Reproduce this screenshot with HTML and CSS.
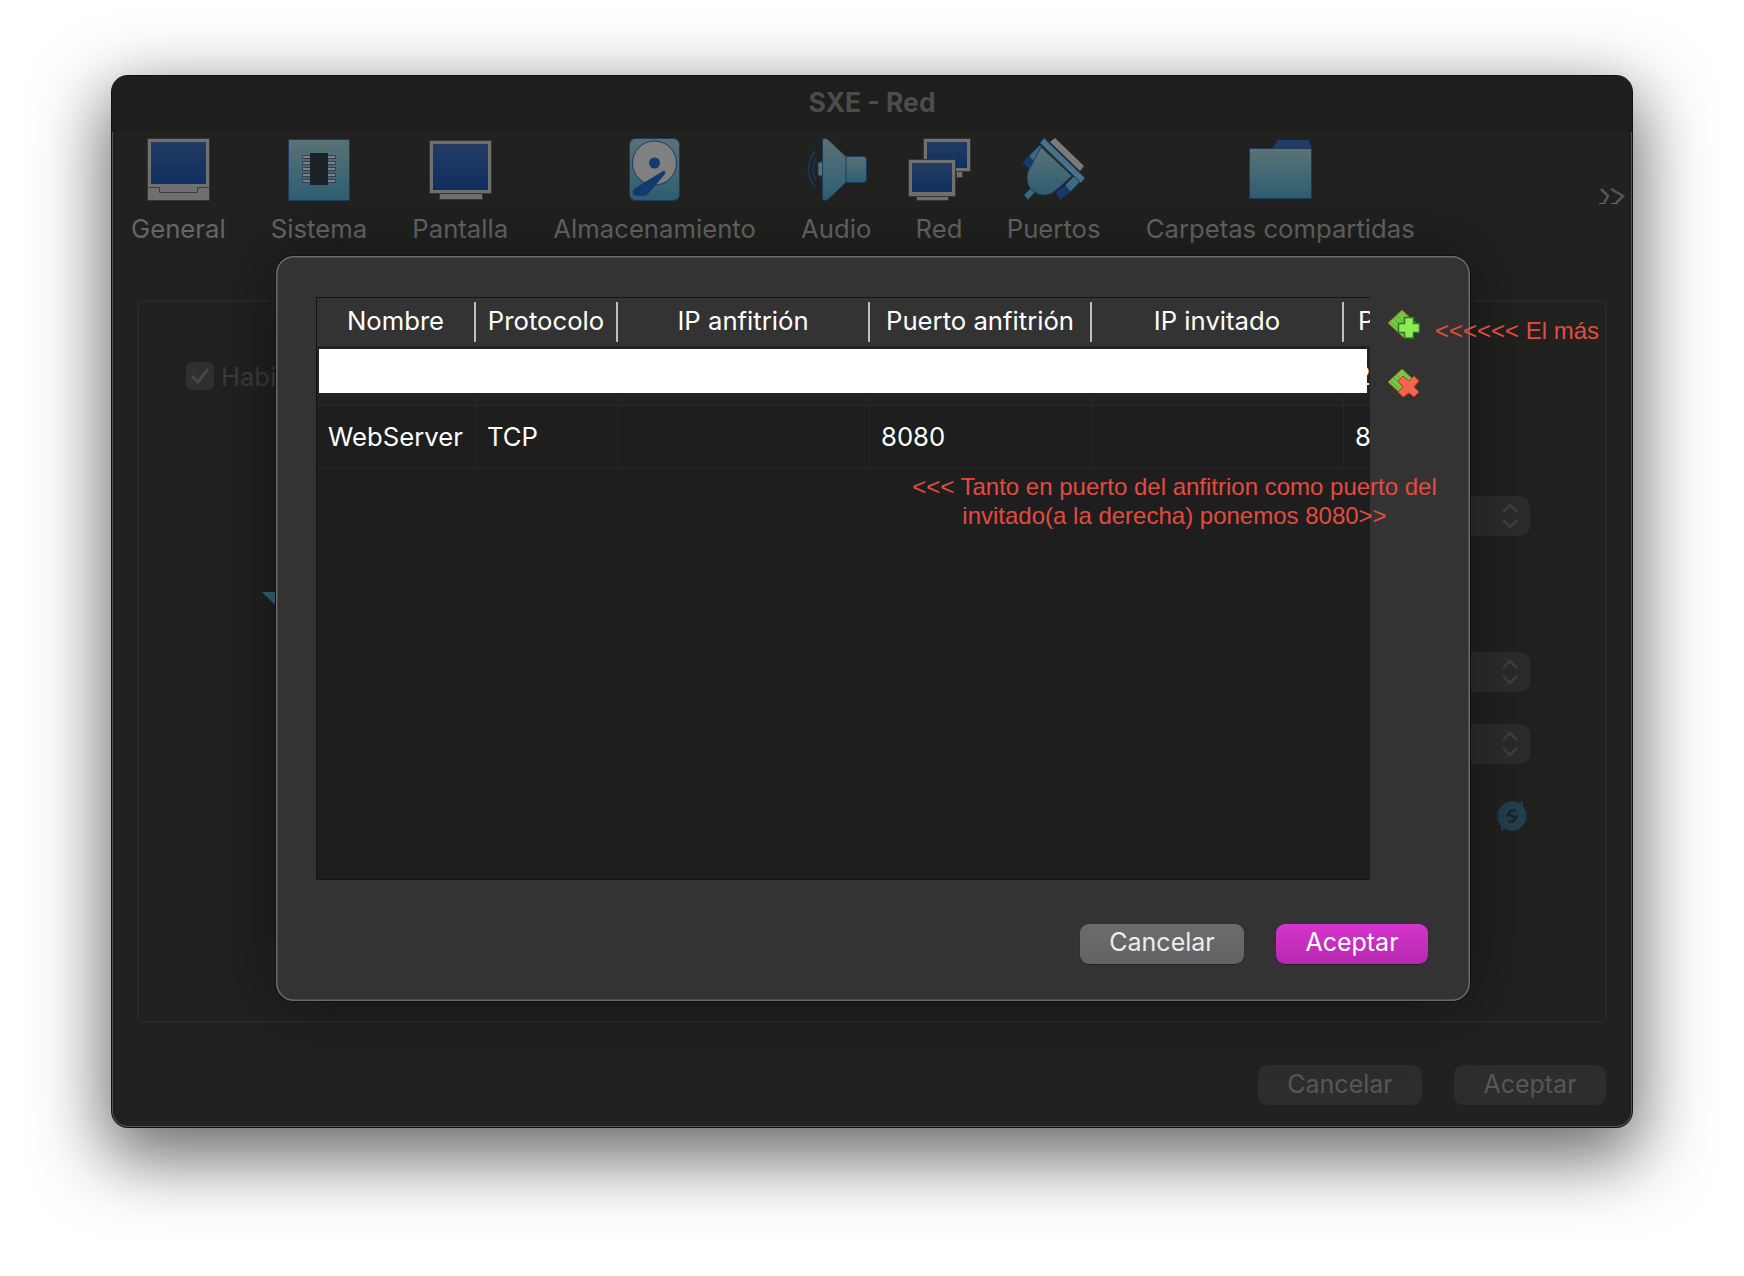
FILE: index.html
```html
<!DOCTYPE html>
<html lang="es">
<head>
    <meta charset="UTF-8">
    <meta name="viewport" content="width=device-width, initial-scale=1.0">
    <title>SXE - Red</title>
    <link rel="stylesheet" href="styles.css">
</head>
<body>
    <div class="page">
    <div class="window">
        <div class="titlebar">SXE - Red</div>

        <div class="toolbar">
            <div class="tool">
                <svg class="tool-icon" width="63" height="63" viewBox="0 0 63 63">
                    <defs>
                        <linearGradient id="teal" x1="0" y1="0" x2="0" y2="1">
                            <stop offset="0" stop-color="#5a7276"/>
                            <stop offset="1" stop-color="#2e5f72"/>
                        </linearGradient>
                        <linearGradient id="screen" x1="0" y1="0" x2="0" y2="1">
                            <stop offset="0" stop-color="#233b62"/>
                            <stop offset="1" stop-color="#0f3060"/>
                        </linearGradient>
                    </defs>
                    <rect x="0.5" y="0.5" width="62" height="62" fill="#707070" stroke="#363636"/>
                    <rect x="4" y="4" width="55" height="42" fill="url(#screen)"/>
                    <path d="M0 49.5H12.5V54.5H50.5V49.5H63" fill="none" stroke="#3c3c3c"/>
                </svg>
                <span>General</span>
            </div>
            <div class="tool">
                <svg class="tool-icon" width="62" height="63" viewBox="0 0 62 63">
                    <rect x="0.5" y="1.5" width="61" height="61" fill="url(#teal)" stroke="#1c3a60"/>
                    <g fill="#808080" stroke="#34405a">
                        <rect x="14.5" y="17.5" width="8" height="3"/>
                        <rect x="14.5" y="23.5" width="8" height="3"/>
                        <rect x="14.5" y="29.5" width="8" height="3"/>
                        <rect x="14.5" y="35.5" width="8" height="3"/>
                        <rect x="14.5" y="41.5" width="8" height="3"/>
                        <rect x="39.5" y="17.5" width="8" height="3"/>
                        <rect x="39.5" y="23.5" width="8" height="3"/>
                        <rect x="39.5" y="29.5" width="8" height="3"/>
                        <rect x="39.5" y="35.5" width="8" height="3"/>
                        <rect x="39.5" y="41.5" width="8" height="3"/>
                    </g>
                    <rect x="22" y="15" width="18" height="32" fill="#1c2227"/>
                </svg>
                <span>Sistema</span>
            </div>
            <div class="tool">
                <svg class="tool-icon" width="63" height="63" viewBox="0 0 63 63">
                    <rect x="10.5" y="50.5" width="43" height="11" fill="#707070" stroke="#363636"/>
                    <rect x="0.5" y="2.5" width="62" height="53" fill="#707070" stroke="#363636"/>
                    <rect x="4" y="6" width="55" height="46" fill="url(#screen)"/>
                </svg>
                <span>Pantalla</span>
            </div>
            <div class="tool">
                <svg class="tool-icon" width="51" height="63" viewBox="0 0 51 63">
                    <rect x="0.5" y="0.5" width="50" height="62" rx="6" fill="url(#teal)" stroke="#1c3a60"/>
                    <circle cx="25.5" cy="25" r="22" fill="#808080" stroke="#1c3a60"/>
                    <circle cx="25.5" cy="25" r="5.5" fill="#143a70"/>
                    <path d="M34 33Q37 32 36 36L19 56Q17 58 13 58H8Q3 57 4 53Q5 50 8 49Z" fill="#143a70"/>
                </svg>
                <span>Almacenamiento</span>
            </div>
            <div class="tool">
                <svg class="tool-icon" width="62" height="63" viewBox="0 0 62 63">
                    <path d="M11 20Q5 31 11 42M10 13Q-3 31 10 49" fill="none" stroke="#143a66" stroke-width="1.5"/>
                    <rect x="13" y="24" width="6" height="14" rx="2" fill="#5a7276" stroke="#1c3a60"/>
                    <rect x="38.5" y="18.5" width="23" height="26" rx="3" fill="url(#teal)" stroke="#1c3a60"/>
                    <path d="M17.5 2Q17.5 .5 19.5 .5Q22 .5 24 2.500L41 18.500V44.500L24 60.500Q22 62.500 19.500 62.500Q17.500 62.500 17.500 60Z" fill="url(#teal)" stroke="#1c3a60"/>
                </svg>
                <span>Audio</span>
            </div>
            <div class="tool tool-tight">
                <svg class="tool-icon" width="63" height="63" viewBox="0 0 63 63">
                    <rect x="48.500" y="30.500" width="6" height="9" fill="#707070" stroke="#363636"/>
                    <rect x="15.500" y="0.500" width="47" height="33" fill="#707070" stroke="#363636"/>
                    <rect x="19" y="4" width="40" height="26" fill="url(#screen)"/>
                    <rect x="8.500" y="54.500" width="32" height="8" fill="#707070" stroke="#363636"/>
                    <rect x="0.500" y="21.500" width="47" height="37" fill="#707070" stroke="#363636"/>
                    <rect x="4" y="25" width="40" height="29" fill="url(#screen)"/>
                </svg>
                <span>Red</span>
            </div>
            <div class="tool">
                <svg class="tool-icon" width="63" height="63" viewBox="0 0 63 63">
                    <path d="M33 0L62 28L58 33L28 4Z" fill="#7a7a7a"/>
                    <path d="M0 25L7 18L12 24L8 31Z" fill="#143a70"/>
                    <path d="M7 18L18 7L24 13L12 24Z" fill="#3d6a82" stroke="#1c3a60"/>
                    <path d="M34 54L43 47L48 54L38 62Z" fill="#143a70"/>
                    <path d="M43 47L52 38L58 44L48 54Z" fill="#3d6a82" stroke="#1c3a60"/>
                    <path d="M2 57L9 50L13 54L6 62Z" fill="#3d6a82" stroke="#1c3a60"/>
                    <path d="M19 9L50 38L33 53Q26 59 16 56Q6 52 5 41Q5 33 9 28Z" fill="url(#teal)" stroke="#1c3a60"/>
                    <path d="M18 5L22 0L63 40L59 45Z" fill="#4a7287" stroke="#1c3a60"/>
                </svg>
                <span>Puertos</span>
            </div>
            <div class="tool">
                <svg class="tool-icon" width="63" height="63" viewBox="0 0 63 63">
                    <path d="M23 11L29 2H60L63 11Z" fill="#1f3d68"/>
                    <rect x="0.500" y="10.500" width="62" height="50" fill="url(#teal)" stroke="#1c3a60"/>
                </svg>
                <span>Carpetas compartidas</span>
            </div>
            <svg class="more" width="27" height="16" viewBox="0 0 27 16">
                <path d="M2 1L9 8L5 15M12 1L24 8L17 15" fill="none" stroke="#555" stroke-width="2.500"/>
                <path d="M0 15.500H6M12 15.500H18" stroke="#6a6a6a" stroke-width="1"/>
            </svg>
        </div>

        <div class="group">
            <div class="check-row">
                <span class="checkbox">
                    <svg width="20" height="18" viewBox="0 0 20 18">
                        <path d="M2 9L8 15L18 2" fill="none" stroke="#484848" stroke-width="3"/>
                    </svg>
                </span>
                <span>Habilitar adaptador de red</span>
            </div>
            <div class="select select-first"><svg class="updown" width="16" height="26" viewBox="0 0 16 26"><path d="M1 9L8 2L15 9M1 17L8 24L15 17" fill="none" stroke="#404040" stroke-width="2.500"/></svg></div>
            <svg class="arrow" width="14" height="14" viewBox="0 0 14 14"><path d="M0 0H14V14Z" fill="#34627a"/></svg>
            <div class="select select-second"><svg class="updown" width="16" height="26" viewBox="0 0 16 26"><path d="M1 9L8 2L15 9M1 17L8 24L15 17" fill="none" stroke="#404040" stroke-width="2.500"/></svg></div>
            <div class="select select-third"><svg class="updown" width="16" height="26" viewBox="0 0 16 26"><path d="M1 9L8 2L15 9M1 17L8 24L15 17" fill="none" stroke="#404040" stroke-width="2.500"/></svg></div>
            <svg class="refresh" width="32" height="32" viewBox="0 0 32 32">
                <circle cx="16" cy="16" r="14.500" fill="#24404e" stroke="#1c3a52"/>
                <path d="M24 2L27 1L27 9ZM8 30L5 31L5 23Z" fill="#24404e"/>
                <path d="M1 16H31" stroke="#17364a" stroke-width="1"/>
                <path d="M20 11Q15 9 13 13L12 15H17M12 21Q17 23 19 19L20 17H15" fill="none" stroke="#16262f" stroke-width="2.500"/>
            </svg>
        </div>

        <div class="actions actions-back">
            <div class="btn btn-dim">Cancelar</div>
            <div class="btn btn-dim">Aceptar</div>
        </div>

        <div class="dialog">
            <div class="dialog-body">
                <div class="rules">
                    <div class="rules-row rules-head">
                        <div class="rules-cell">Nombre</div>
                        <div class="rules-cell">Protocolo</div>
                        <div class="rules-cell">IP anfitrión</div>
                        <div class="rules-cell">Puerto anfitrión</div>
                        <div class="rules-cell">IP invitado</div>
                        <div class="rules-cell">Puerto invitado</div>
                    </div>
                    <div class="rules-row rules-editing">
                        <div class="rules-cell"></div>
                        <div class="rules-cell"></div>
                        <div class="rules-cell"></div>
                        <div class="rules-cell"></div>
                        <div class="rules-cell"></div>
                        <div class="rules-cell">22</div>
                        <div class="edit-bar"></div>
                    </div>
                    <div class="rules-row rules-data">
                        <div class="rules-cell">WebServer</div>
                        <div class="rules-cell">TCP</div>
                        <div class="rules-cell"></div>
                        <div class="rules-cell">8080</div>
                        <div class="rules-cell"></div>
                        <div class="rules-cell">8080</div>
                    </div>
                </div>
                <div class="rule-tools">
                    <svg width="32" height="32" viewBox="0 0 32 32">
                        <path d="M17 0L32 14L18 31Z" fill="none" stroke="#2c4a2c" stroke-width="0.600"/>
                        <path d="M14 3L0 16L16 31L28 16Z" fill="#74c944" stroke="#c8502a" stroke-width="0.800"/>
                        <path d="M6 12L18 24M9 9L21 21M3 15L15 27" stroke="#5aa834" stroke-width="1"/>
                        <path d="M16.500 10.500H25.500V16.500H31.500V25.500H25.500V31H16.500V25.500H10.500V16.500H16.500Z" fill="#8fea58" stroke="#2a7a1e" stroke-width="1.500"/>
                    </svg>
                    <svg width="32" height="32" viewBox="0 0 32 32">
                        <path d="M17 0L32 14L18 31Z" fill="none" stroke="#2c4a2c" stroke-width="0.600"/>
                        <path d="M14 3L0 16L16 31L28 16Z" fill="#74c944" stroke="#c8502a" stroke-width="0.800"/>
                        <path d="M6 12L18 24M9 9L21 21M3 15L15 27" stroke="#5aa834" stroke-width="1"/>
                        <path d="M15 10L21 15L26 10L31 15L26 21L31 26L26 31L21 27L15 31L10 26L15 21L10 15Z" fill="#f0664e" stroke="#c03020" stroke-width="1"/>
                    </svg>
                </div>
            </div>
            <div class="actions actions-front">
                <div class="btn btn-cancel">Cancelar</div>
                <div class="btn btn-accept">Aceptar</div>
            </div>
        </div>

        <div class="note note-plus">&lt;&lt;&lt;&lt;&lt;&lt; El más</div>
        <div class="note note-ports">&lt;&lt;&lt; Tanto en puerto del anfitrion como puerto del<br>invitado(a la derecha) ponemos 8080&gt;&gt;</div>
    </div>
    </div>
</body>
</html>
```

FILE: styles.css
```css
html {
    background: #fff;
}

body {
    margin: 0;
    font-family: Inter, "Noto Sans", sans-serif;
    font-size: 25.700px;
}

.page {
    box-sizing: border-box;
    height: 1276px;
    padding: 76px 0 0 112px;
}

.window {
    position: relative;
    box-sizing: border-box;
    width: 1520px;
    height: 1051px;
    background: #212120;
    border-radius: 16px;
    box-shadow: 0 0 0 1px #111, inset 0 0 0 1px #555, 0 24px 70px 8px rgba(0, 0, 0, 0.58);
}

.titlebar {
    height: 56px;
    line-height: 53px;
    text-align: center;
    font-size: 26.500px;
    font-weight: 700;
    color: #4c4c4c;
    background: #1e1e1d;
    border-radius: 16px 16px 0 0;
}

.toolbar {
    display: flex;
    gap: 45.200px;
    height: 168px;
    box-sizing: border-box;
    padding: 6px 0 0 19px;
}

.tool {
    display: flex;
    flex-direction: column;
    align-items: center;
    color: #666;
}

.tool span {
    margin-top: 12px;
    white-space: nowrap;
}

.tool-tight {
    margin: 0 -9px;
}

.tool-icon {
    display: block;
}

.more {
    margin: 50px 6px 0 auto;
}

.group {
    display: flex;
    flex-direction: column;
    box-sizing: border-box;
    height: 723px;
    margin: 0 25px;
    border: 2px solid #292929;
    border-radius: 8px;
    color: #3c3c3c;
}

.check-row {
    display: flex;
    align-items: center;
    gap: 7px;
    height: 28px;
    margin: 60px 0 0 47px;
    font-size: 25.500px;
    white-space: nowrap;
}

.checkbox {
    display: flex;
    align-items: center;
    justify-content: center;
    width: 28px;
    height: 28px;
    background: #303030;
    border-radius: 6px;
}

.select {
    display: flex;
    align-items: center;
    justify-content: flex-end;
    align-self: flex-end;
    box-sizing: border-box;
    width: 400px;
    height: 40px;
    margin-right: 75px;
    padding-right: 12px;
    background: #2c2c2c;
    border-radius: 10px;
}

.select-first {
    margin-top: 106px;
}

.arrow {
    margin: 56px 0 0 123px;
}

.select-second {
    margin-top: 46px;
}

.select-third {
    margin-top: 32px;
}

.refresh {
    align-self: flex-end;
    margin: 36px 77px 0 0;
}

.actions {
    display: flex;
    justify-content: flex-end;
    gap: 32px;
}

.actions-back {
    margin-top: 42px;
    padding-right: 26px;
}

.btn {
    height: 40px;
    line-height: 37px;
    box-sizing: border-box;
    text-align: center;
    font-size: 25px;
    border-radius: 9px;
    width: 164px;
}

.btn + .btn {
    width: 152px;
}

.btn-dim {
    line-height: 39px;
    background: #2d2d2d;
    color: #575757;
}

.btn-cancel {
    background: linear-gradient(#6c6c6c, #626262);
    color: #ececec;
    box-shadow: 0 1px 1px rgba(0, 0, 0, 0.3);
}

.btn-accept {
    background: linear-gradient(#d634cf, #b529ae);
    color: #fff;
    box-shadow: 0 1px 1px rgba(0, 0, 0, 0.3);
}

.dialog {
    position: absolute;
    left: 164px;
    top: 180px;
    box-sizing: border-box;
    width: 1194px;
    height: 745px;
    padding: 41px 0 0 40px;
    background: #333;
    border-radius: 18px;
    box-shadow: 0 0 0 1px #111, inset 0 0 0 1.500px #6a6a6a, 0 0 70px rgba(0, 0, 0, 0.4);
}

.dialog-body {
    display: flex;
    gap: 18px;
}

.rules {
    box-sizing: border-box;
    width: 1054px;
    height: 583px;
    overflow: hidden;
    background: #1e1e1e;
    border: 1px solid #141414;
    border-right: none;
    flex-shrink: 0;
}

.rules-row {
    display: grid;
    grid-template-columns: 159px 142px 252px 222px 252px 240px;
    color: #fff;
}

.rules-cell {
    box-sizing: border-box;
    padding-left: 11px;
    white-space: nowrap;
    overflow: hidden;
}

.rules-head {
    height: 48px;
    padding-top: 4px;
    box-sizing: border-box;
    background: #333;
}

.rules-head .rules-cell {
    height: 40px;
    line-height: 38px;
    padding-left: 0;
    text-align: center;
    border-right: 2px solid #bdbdbd;
}

.rules-head .rules-cell:last-of-type {
    padding-left: 14px;
    text-align: left;
    border-right: none;
}

.rules-editing {
    position: relative;
    height: 60px;
    line-height: 60px;
    background: #222;
    border-bottom: 1px solid #272727;
    box-sizing: border-box;
}

.rules-data {
    height: 62px;
    line-height: 61px;
    border-bottom: 1px solid #272727;
    box-sizing: border-box;
}

.rules-editing .rules-cell,
.rules-data .rules-cell {
    border-right: 1px solid #272727;
}

.edit-bar {
    position: absolute;
    left: 2px;
    top: 3px;
    width: 1048px;
    height: 44px;
    background: #fff;
}

.rule-tools {
    display: flex;
    flex-direction: column;
    gap: 27px;
    margin-top: 10px;
}

.rule-tools svg {
    display: block;
}

.actions-front {
    margin-top: 44px;
    padding-right: 42px;
}

.note {
    position: absolute;
    font-family: "Liberation Sans", Arial, sans-serif;
    font-size: 24px;
    color: #e24c40;
    white-space: nowrap;
}

.note-plus {
    left: 1323px;
    top: 241px;
    line-height: 28px;
}

.note-ports {
    left: 800px;
    top: 396px;
    width: 525px;
    text-align: center;
    line-height: 29px;
}
```
